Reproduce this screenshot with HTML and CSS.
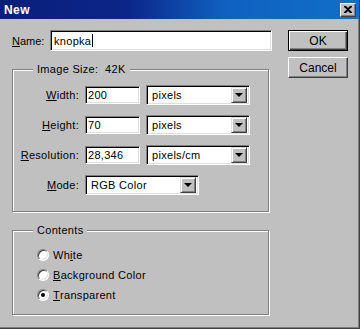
FILE: index.html
```html
<!DOCTYPE html>
<html lang="en">
<head>
    <meta charset="UTF-8">
    <title>New</title>
    <link rel="stylesheet" href="styles.css">
</head>
<body>
    <div class="window">
        <div class="titlebar">
            <span class="title">New</span>
            <div class="close">
                <svg width="8" height="7" viewBox="0 0 8 7">
                    <path d="M0 0h2l2 2 2-2h2v1l-3 2.5 3 2.5v1h-2l-2-2-2 2h-2v-1l3-2.5-3-2.5z" fill="#000"/>
                </svg>
            </div>
        </div>
        <div class="content">
            <div class="main">
                <div class="name-row">
                    <label class="name-label"><u>N</u>ame:</label>
                    <div class="field name-field">knopka<span class="caret"></span></div>
                </div>

                <fieldset class="group size-group">
                    <legend>Image Size:&nbsp;&nbsp;42K</legend>
                    <div class="row">
                        <label class="row-label"><u>W</u>idth:</label>
                        <div class="field num-field">200</div>
                        <div class="field combo unit-combo">pixels<span class="arrow"></span></div>
                    </div>
                    <div class="row">
                        <label class="row-label"><u>H</u>eight:</label>
                        <div class="field num-field">70</div>
                        <div class="field combo unit-combo">pixels<span class="arrow"></span></div>
                    </div>
                    <div class="row">
                        <label class="row-label"><u>R</u>esolution:</label>
                        <div class="field num-field">28,346</div>
                        <div class="field combo unit-combo">pixels/cm<span class="arrow"></span></div>
                    </div>
                    <div class="row">
                        <label class="row-label"><u>M</u>ode:</label>
                        <div class="field combo mode-combo">RGB Color<span class="arrow"></span></div>
                    </div>
                </fieldset>

                <fieldset class="group contents-group">
                    <legend>Contents</legend>
                    <div class="radio-row"><span class="radio"></span>Wh<u>i</u>te</div>
                    <div class="radio-row"><span class="radio"></span><u>B</u>ackground Color</div>
                    <div class="radio-row"><span class="radio checked"></span><u>T</u>ransparent</div>
                </fieldset>
            </div>

            <div class="buttons">
                <button class="btn default">OK</button>
                <button class="btn">Cancel</button>
            </div>
        </div>
    </div>
</body>
</html>
```

FILE: styles.css
```css
body {
    margin: 0;
    font-family: "Liberation Sans", Arial, sans-serif;
    font-size: 11px;
    color: #000;
    background: #c0c0c0;
}
u {
    text-decoration: underline;
    text-underline-offset: 1px;
}
.window {
    width: 360px;
    height: 329px;
    box-sizing: border-box;
    background: #c0c0c0;
    border-right: 1px solid #404040;
    border-bottom: 1px solid #404040;
    box-shadow: inset -1px -1px 0 #808080;
}
.titlebar {
    height: 19px;
    display: flex;
    align-items: center;
    justify-content: space-between;
    padding: 0 3px 0 4px;
    background: linear-gradient(to right, #0a1f7c 0%, #0b2588 35%, #1060c0 62%, #1070c8 100%);
}
.title {
    color: #fff;
    font-weight: bold;
    font-size: 12px;
    letter-spacing: 0.4px;
}
.close {
    width: 16px;
    height: 14px;
    box-sizing: border-box;
    background: #c0c0c0;
    border: 1px solid;
    border-color: #fff #404040 #404040 #fff;
    box-shadow: inset -1px -1px 0 #808080;
    display: flex;
    align-items: center;
    justify-content: center;
}
.content {
    display: flex;
    padding: 11px 0 0 12px;
}
.main {
    width: 260px;
}
.name-row {
    display: flex;
    align-items: center;
    height: 21px;
}
.name-label {
    width: 38px;
}
.field {
    box-sizing: border-box;
    background: #fff;
    border: 1px solid;
    border-color: #808080 #fff #fff #808080;
    box-shadow: inset 1px 1px 0 #000, inset -1px -1px 0 #dfdfdf;
    display: flex;
    align-items: center;
    padding-left: 3px;
    letter-spacing: 0.3px;
}
.name-field {
    width: 222px;
    height: 21px;
    flex: none;
}
.caret {
    width: 1px;
    height: 13px;
    background: #000;
    margin-left: 1px;
}
.group {
    margin: 0;
    padding: 0;
    border: 1px solid #808080;
    box-shadow: 1px 1px 0 #fff, inset 1px 1px 0 #fff;
    width: 257px;
    box-sizing: border-box;
}
.group legend {
    margin-left: 20px;
    padding: 0 4px;
    line-height: 13px;
    background: #c0c0c0;
    letter-spacing: 0.3px;
}
.size-group {
    margin-top: 12px;
    padding: 9px 0 16px 0;
    display: flex;
    flex-direction: column;
    gap: 10px;
}
.row {
    display: flex;
    align-items: center;
    height: 20px;
}
.row-label {
    width: 66px;
    text-align: right;
    margin-right: 6px;
    letter-spacing: 0.3px;
}
.num-field {
    width: 55px;
    height: 18px;
    padding-left: 2px;
    margin-right: 6px;
}
.combo {
    height: 20px;
    justify-content: space-between;
    padding: 0 2px 0 5px;
}
.unit-combo {
    width: 104px;
}
.mode-combo {
    width: 114px;
}
.arrow {
    width: 16px;
    height: 16px;
    box-sizing: border-box;
    background: #c0c0c0;
    border: 1px solid;
    border-color: #dfdfdf #404040 #404040 #dfdfdf;
    box-shadow: inset 1px 1px 0 #fff, inset -1px -1px 0 #808080;
    position: relative;
}
.arrow::after {
    content: "";
    position: absolute;
    left: 3px;
    top: 5px;
    border-left: 4px solid transparent;
    border-right: 4px solid transparent;
    border-top: 4px solid #000;
}
.contents-group {
    margin-top: 12px;
    padding: 11px 0 13px 0;
    display: flex;
    flex-direction: column;
    gap: 7px;
}
.radio-row {
    display: flex;
    align-items: center;
    height: 13px;
    margin-left: 24px;
    letter-spacing: 0.3px;
}
.radio {
    width: 12px;
    height: 12px;
    box-sizing: border-box;
    border-radius: 50%;
    background: #fff;
    border: 1px solid;
    border-color: #808080 #fff #fff #808080;
    box-shadow: inset 1px 1px 0 #404040, inset -1px -1px 0 #dfdfdf;
    margin-right: 4px;
    position: relative;
}
.radio.checked::after {
    content: "";
    position: absolute;
    left: 3px;
    top: 3px;
    width: 4px;
    height: 4px;
    border-radius: 50%;
    background: #000;
}
.buttons {
    display: flex;
    flex-direction: column;
    gap: 6px;
    margin-left: 16px;
}
.btn {
    width: 60px;
    height: 21px;
    box-sizing: border-box;
    font: inherit;
    font-size: 12px;
    background: #c0c0c0;
    border: 1px solid;
    border-color: #fff #404040 #404040 #fff;
    box-shadow: inset -1px -1px 0 #808080;
    padding: 0;
}
.btn.default {
    border-color: #000;
    box-shadow: inset 1px 1px 0 #fff, inset -1px -1px 0 #404040, inset -2px -2px 0 #808080;
}
```
